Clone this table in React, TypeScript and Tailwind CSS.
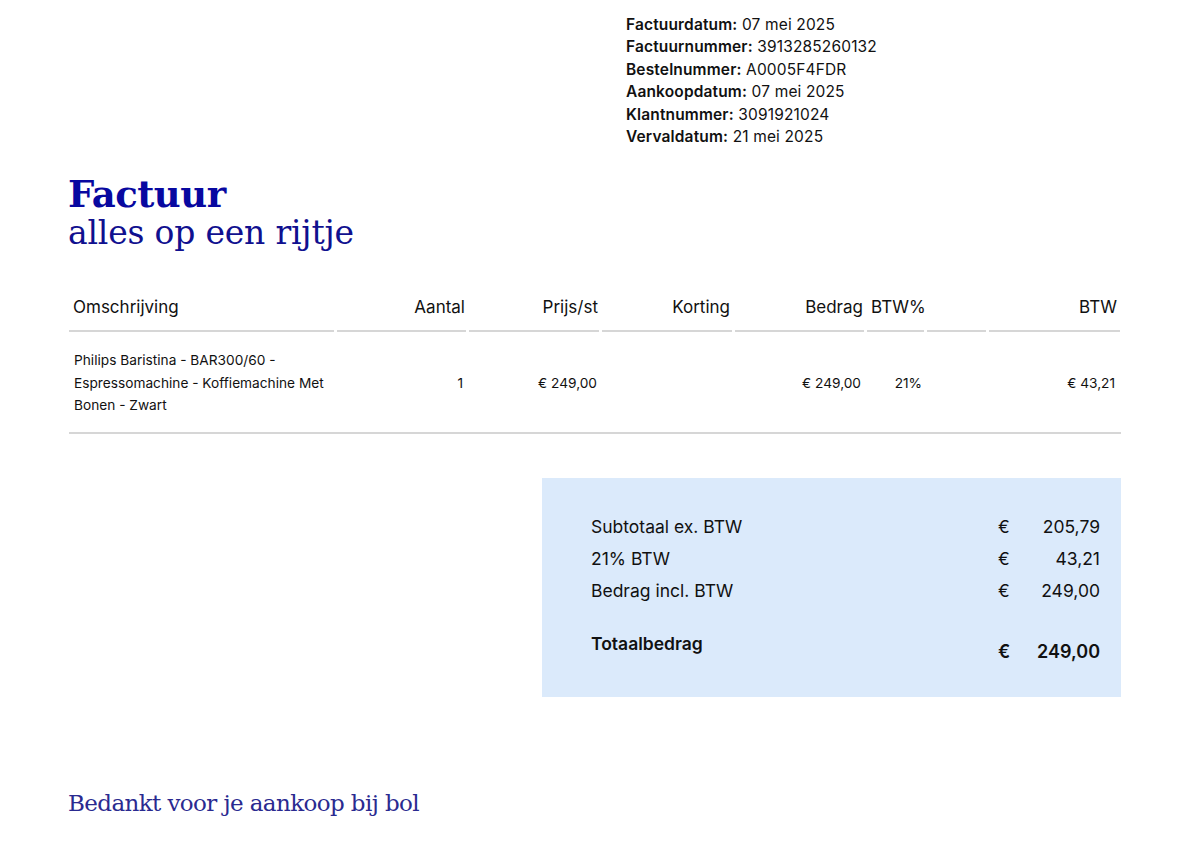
const info = [
  ["Factuurdatum:", "07 mei 2025"],
  ["Factuurnummer:", "3913285260132"],
  ["Bestelnummer:", "A0005F4FDR"],
  ["Aankoopdatum:", "07 mei 2025"],
  ["Klantnummer:", "3091921024"],
  ["Vervaldatum:", "21 mei 2025"],
];

const columns = [
  { label: "Omschrijving", align: "text-left pl-[4px]" },
  { label: "Aantal", align: "text-right pr-[1px]" },
  { label: "Prijs/st", align: "text-right pr-[1px]" },
  { label: "Korting", align: "text-right pr-[2px]" },
  { label: "Bedrag", align: "text-right pr-[1px]" },
  { label: "BTW%", align: "text-left pl-[4px]" },
  { label: "", align: "" },
  { label: "BTW", align: "text-right pr-[3px]" },
];

const totals = [
  ["Subtotaal ex. BTW", "205,79"],
  ["21% BTW", "43,21"],
  ["Bedrag incl. BTW", "249,00"],
];

const serif = "font-['DejaVu_Serif',serif]";

export default function App() {
  return (
    <div className="min-h-[848px] w-[1184px] bg-white px-[68px] font-['Inter',sans-serif] text-[#111]">
      <div className="ml-[558px] pt-[14px] text-[15.5px] leading-[22.4px] tracking-[0.15px]">
        {info.map(([k, v]) => (
          <div key={k}>
            <span className="font-semibold">{k}</span> {v}
          </div>
        ))}
      </div>

      <div className={`mt-[27px] text-[#0808a0] ${serif}`}>
        <h1 className="text-[37px] font-black leading-[38px] tracking-[-0.5px]">Factuur</h1>
        <p className="text-[33px] leading-[40px] tracking-[-0.2px] text-[#10108f]">alles op een rijtje</p>
      </div>

      <div className="mt-[44px] ml-px w-[1052px]">
        <div className="grid grid-cols-[265px_129px_130px_130px_129px_57px_59px_131px] gap-x-[3px]">
          {columns.map((c, i) => (
            <div
              key={i}
              className={`border-b-2 border-[#d6d6d6] pb-[13px] text-[17px] leading-[20px] ${c.align}`}
            >
              {c.label}
            </div>
          ))}
        </div>
        <div className="grid grid-cols-[265px_129px_130px_130px_129px_57px_59px_131px] items-center gap-x-[3px] border-b-2 border-[#d6d6d6] pt-[17px] pb-[15px] text-[13.7px] leading-[22.4px]">
          <div className="pl-[5px]">
            Philips Baristina - BAR300/60 -<br />
            Espressomachine - Koffiemachine Met<br />
            Bonen - Zwart
          </div>
          <div className="pr-[3px] text-right">1</div>
          <div className="pr-[2px] text-right">€ 249,00</div>
          <div></div>
          <div className="pr-[3px] text-right">€ 249,00</div>
          <div className="pr-[2px] text-right">21%</div>
          <div></div>
          <div className="pr-[5px] text-right">€ 43,21</div>
        </div>
      </div>

      <div className="mt-[44px] ml-[474px] w-[579px] bg-[#dbeafb] pt-[33px] pb-[31px] pl-[49px] pr-[21px]">
        {totals.map(([k, v]) => (
          <div key={k} className="flex items-center text-[17.5px] leading-[32px]">
            <span className="flex-1">{k}</span>
            <span className="w-[14px]">€</span>
            <span className="w-[88px] text-right">{v}</span>
          </div>
        ))}
        <div className="mt-[23px] flex items-start text-[17.5px] font-semibold">
          <span className="flex-1 leading-[28px]">Totaalbedrag</span>
          <span className="mt-[8px] w-[14px] text-[18px] leading-[28px]">€</span>
          <span className="mt-[8px] w-[88px] text-right text-[18px] leading-[28px]">249,00</span>
        </div>
      </div>

      <p className={`mt-[91px] text-[23px] leading-[30px] text-[#2a2a90] tracking-[-0.6px] ${serif} font-light`}>
        Bedankt voor je aankoop bij bol
      </p>
    </div>
  );
}
